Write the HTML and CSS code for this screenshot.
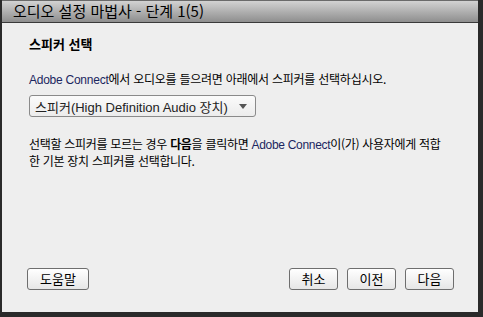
FILE: index.html
```html
<!DOCTYPE html>
<html lang="ko">
<head>
    <meta charset="UTF-8">
    <title>오디오 설정 마법사</title>
    <link rel="stylesheet" href="styles.css">
</head>
<body>
    <div class="dialog">
        <div class="title-bar">오디오 설정 마법사 - 단계 1(5)</div>
        <div class="content">
            <h2 class="section-title">스피커 선택</h2>
            <p class="intro"><span class="brand">Adobe Connect</span>에서 오디오를 들으려면 아래에서 스피커를 선택하십시오.</p>
            <div class="select">
                <span class="select-value">스피커(High Definition Audio 장치)</span>
                <span class="select-arrow"></span>
            </div>
            <p class="note">선택할 스피커를 모르는 경우 <b>다음</b>을 클릭하면 <span class="brand">Adobe Connect</span>이(가) 사용자에게 적합<br>한 기본 장치 스피커를 선택합니다.</p>
        </div>
        <div class="footer">
            <button class="btn btn-help">도움말</button>
            <div class="nav-buttons">
                <button class="btn">취소</button>
                <button class="btn">이전</button>
                <button class="btn">다음</button>
            </div>
        </div>
    </div>
</body>
</html>
```

FILE: styles.css
```css
body {
    margin: 0;
    background: #2a2a2a;
    font-family: 'Liberation Sans', 'Noto Sans CJK KR', sans-serif;
    color: #000;
    height: 317px;
    overflow: hidden;
}

.dialog {
    margin-left: 2px;
    width: 476px;
    height: 312px;
    background: #eeeeee;
    display: flex;
    flex-direction: column;
}

.title-bar {
    height: 23px;
    box-sizing: border-box;
    border-top: 1px solid #6a6a6a;
    border-bottom: 1px solid #3a3a3a;
    background: linear-gradient(#d2d2d2, #8e8e8e);
    padding-left: 11px;
    font-family: 'Noto Sans CJK KR', sans-serif;
    font-size: 15px;
    line-height: 20px;
}

.content {
    padding: 12px 27px 0;
    flex: 1;
}

.section-title {
    margin: 0;
    font-family: 'Noto Sans CJK KR', sans-serif;
    font-size: 13px;
    font-weight: bold;
    line-height: 18px;
}

.intro {
    margin: 17px 0 0;
    font-size: 12px;
    line-height: 17px;
    font-family: 'Noto Sans CJK KR', sans-serif;
    letter-spacing: -0.25px;
    white-space: nowrap;
}

.brand {
    font-family: 'Liberation Sans', sans-serif;
    color: #1c2660;
}

.select {
    margin-top: 6px;
    width: 227px;
    height: 22px;
    box-sizing: border-box;
    border: 1px solid #8a8a8a;
    border-radius: 3px;
    background: linear-gradient(#fbfbfb, #ececec);
    display: flex;
    align-items: center;
    justify-content: space-between;
    padding: 0 8px 0 5px;
}

.select-value {
    font-family: 'Liberation Sans', 'Noto Sans CJK KR', sans-serif;
    font-size: 13px;
    color: #222;
}

.select-arrow {
    width: 0;
    height: 0;
    border-left: 4px solid transparent;
    border-right: 4px solid transparent;
    border-top: 5px solid #555;
}

.note {
    margin: 19px 0 0;
    font-family: 'Noto Sans CJK KR', sans-serif;
    font-size: 12px;
    line-height: 16px;
    letter-spacing: -0.3px;
    white-space: nowrap;
}

.footer {
    display: flex;
    justify-content: space-between;
    padding: 0 24px 22px 25px;
}

.nav-buttons {
    display: flex;
    gap: 9px;
}

.btn {
    width: 49px;
    height: 22px;
    box-sizing: border-box;
    border: 1px solid #6e6e6e;
    border-radius: 3px;
    background: linear-gradient(#ffffff, #e6e6e6);
    font-family: 'Noto Sans CJK KR', sans-serif;
    font-size: 13px;
    color: #000;
    padding: 0;
    line-height: 18px;
}

.btn-help {
    width: 62px;
}
```
